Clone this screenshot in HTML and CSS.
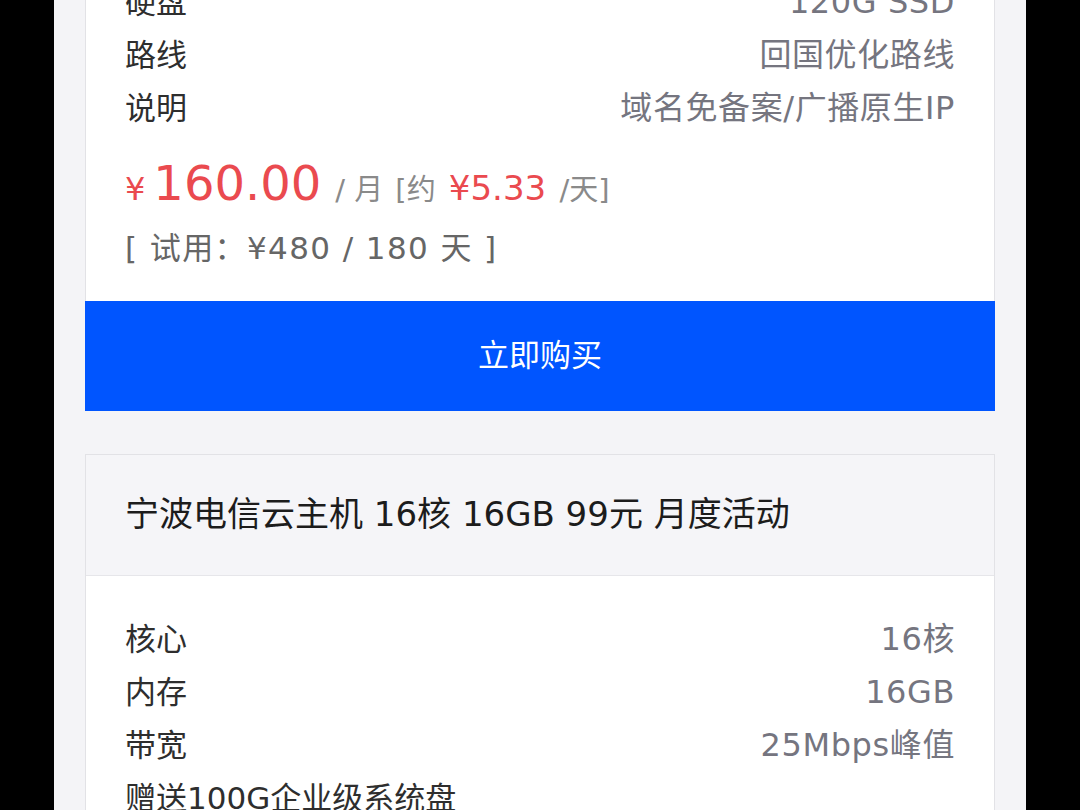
FILE: index.html
```html
<!DOCTYPE html>
<html lang="zh-CN">
<head>
  <meta charset="UTF-8">
  <meta name="viewport" content="width=device-width, initial-scale=1.0">
  <title>云主机套餐</title>
  <link rel="stylesheet" href="styles.css">
</head>
<body>
  <div class="screen">
    <div class="card card-top">
      <div class="card-body">
        <ul class="specs">
          <li><span>硬盘</span><span class="val">120G SSD</span></li>
          <li><span>路线</span><span class="val">回国优化路线</span></li>
          <li><span>说明</span><span class="val">域名免备案/广播原生IP</span></li>
        </ul>
        <div class="price">
          <span class="cur">¥</span><span class="amount">160.00</span>
          <span class="unit">/ 月</span>
          <span class="unit">[约 <em>¥5.33</em> /天]</span>
        </div>
        <div class="trial">[ 试用：¥480 / 180 天 ]</div>
      </div>
      <a class="buy" href="#">立即购买</a>
    </div>

    <div class="card">
      <div class="card-head">宁波电信云主机 16核 16GB 99元 月度活动</div>
      <div class="card-body">
        <ul class="specs">
          <li><span>核心</span><span class="val">16核</span></li>
          <li><span>内存</span><span class="val">16GB</span></li>
          <li><span>带宽</span><span class="val">25Mbps峰值</span></li>
          <li><span>赠送100G企业级系统盘</span></li>
        </ul>
      </div>
    </div>
  </div>
</body>
</html>
```

FILE: styles.css
```css
html, body {
  margin: 0;
  background-color: #000;
}
body {
  font-family: "DejaVu Sans", "Noto Sans CJK SC", sans-serif;
  color: #333;
}
.screen {
  width: 972px;
  height: 100vh;
  overflow: hidden;
  margin: 0 auto;
  padding: 0 31px;
  box-sizing: border-box;
  display: flow-root;
  background-color: #f4f4f7;
}
.card {
  background-color: #fff;
  border: 1px solid #e2e2e6;
  margin-bottom: 43px;
}
.card-top {
  margin-top: -61px;
}
.card-head {
  height: 121px;
  display: flex;
  align-items: center;
  padding: 0 39px 8px;
  box-sizing: border-box;
  background-color: #f5f5f8;
  border-bottom: 1px solid #e6e6ea;
  font-size: 34px;
  color: #1c1c1c;
}
.card-body {
  padding: 37px 39px 27px;
}
.card-top .card-body {
  padding-top: 36px;
}
.specs {
  list-style: none;
  margin: 0;
  padding: 0;
}
.specs li {
  display: flex;
  justify-content: space-between;
  font-size: 31px;
  line-height: 53px;
  color: #2e2e2e;
}
.specs .val {
  font-size: 32px;
  letter-spacing: 0.6px;
  color: #75757f;
}
.price {
  margin-top: 20px;
  height: 62px;
  display: flex;
  align-items: baseline;
  color: #8a8a8a;
  font-size: 29px;
}
.price .cur {
  color: #ea4a4f;
  font-size: 32px;
}
.price .amount {
  color: #ea4a4f;
  font-size: 48px;
  margin: 0 14px 0 8px;
}
.price .unit {
  margin-right: 12px;
}
.price em {
  font-style: normal;
  color: #ea4a4f;
  font-size: 34px;
  margin: 0 4px;
}
.trial {
  margin-top: 5px;
  font-size: 31px;
  letter-spacing: 1.4px;
  line-height: 52px;
  color: #666;
}
.buy {
  display: block;
  height: 110px;
  margin: 0 -1px -1px;
  line-height: 108px;
  text-align: center;
  background-color: #0055ff;
  color: #fff;
  font-size: 31px;
  text-decoration: none;
}
```
